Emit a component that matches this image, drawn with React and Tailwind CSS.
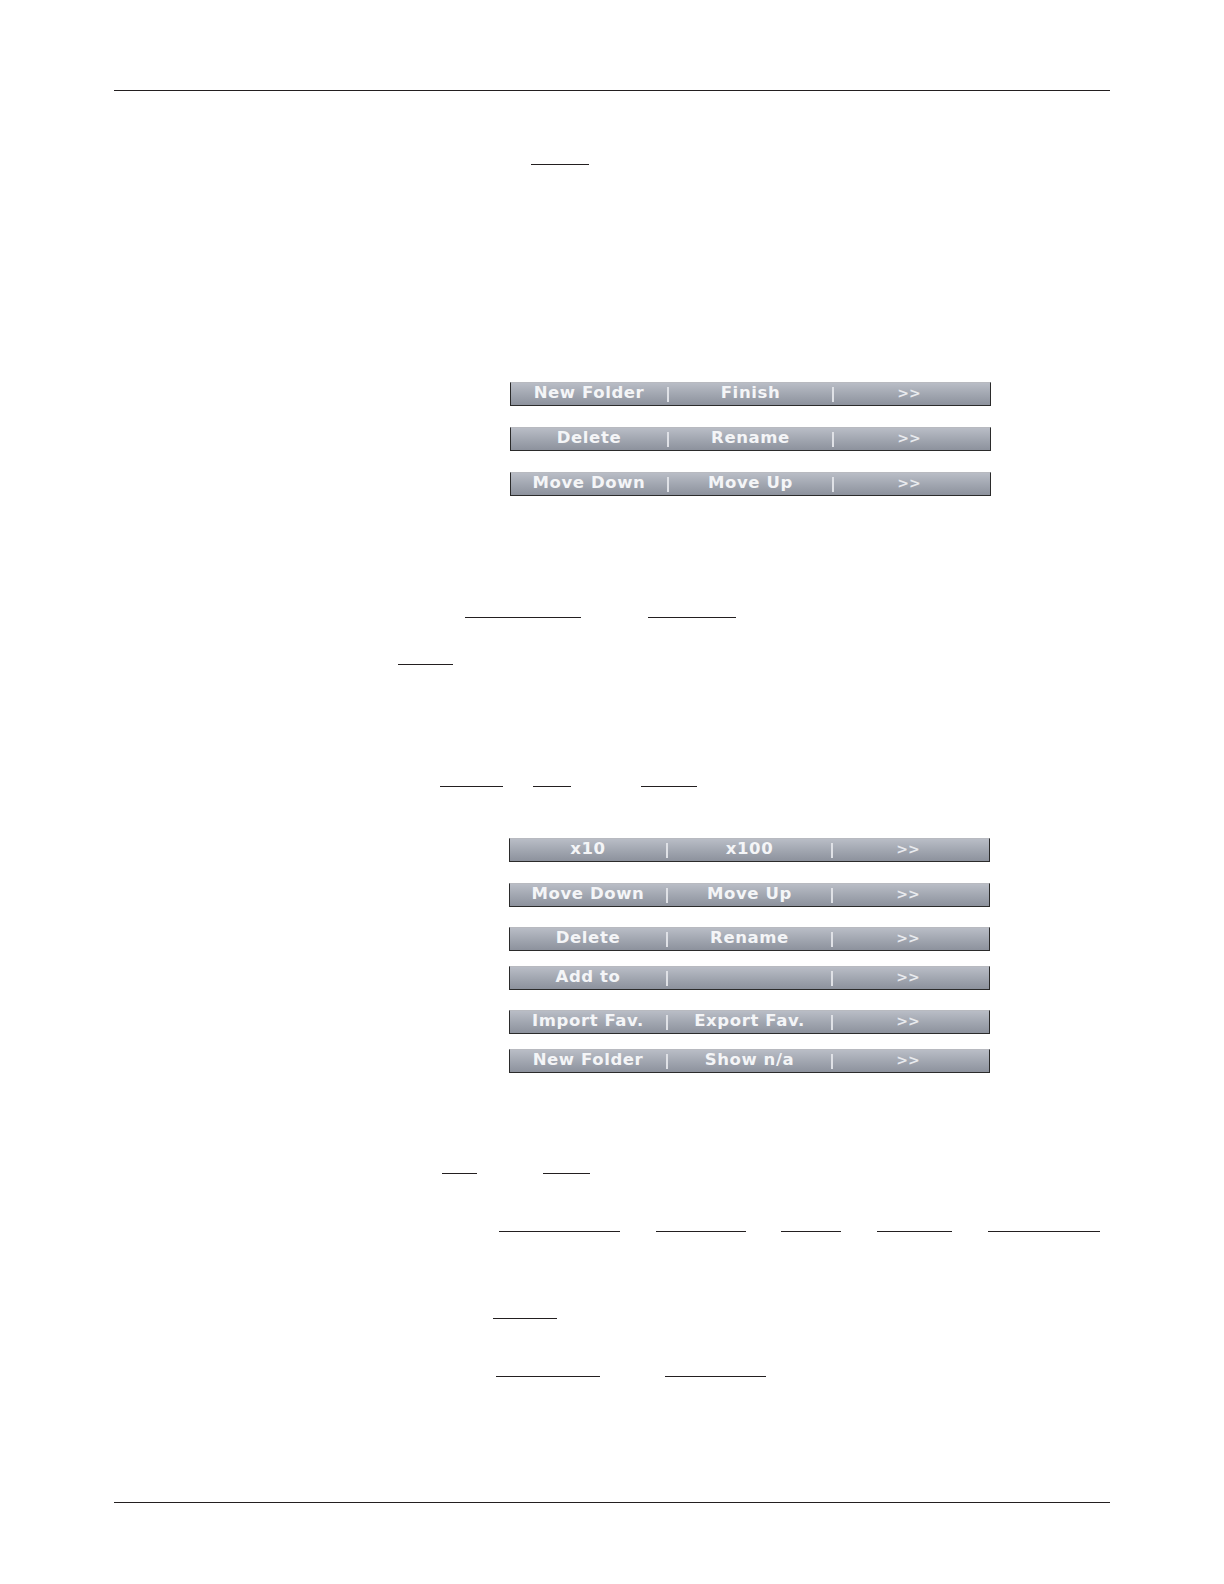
const Bar = ({ a, b, className = "" }) => (
  <div
    className={`flex h-[24px] w-[481px] items-center border border-[#2b2b2b] border-t-[#b8bac0] bg-gradient-to-b from-[#b9bdc6] via-[#a2a7b1] to-[#8d929d] font-['DejaVu_Sans',sans-serif] text-[16.5px] font-bold tracking-[0.6px] text-[#f4f5f7] ${className}`}
  >
    <div className="flex w-[156px] justify-center pb-[2px] leading-none">{a}</div>
    <div className="h-[15px] w-[2px] bg-[#dfe1e6]" />
    <div className="flex w-[163px] justify-center pb-[2px] leading-none">{b}</div>
    <div className="h-[15px] w-[2px] bg-[#dfe1e6]" />
    <div className="flex flex-1 justify-center pb-[2px] pr-[6px] text-[14px] leading-none tracking-[0px] text-[#e8eaee]">&gt;&gt;</div>
  </div>
);

export default function App() {
  return (
    <div className="min-h-[1584px] w-[1224px] bg-white">
      <div className="h-[90px]" />
      <div className="mx-[114px] h-px bg-[#231f20]" />

      <div className="mt-[73px] flex h-px">
        <span className="ml-[531px] w-[58px] bg-[#231f20]" />
      </div>

      <div className="ml-[510px] mt-[217px] flex flex-col gap-[21px]">
        <Bar a="New Folder" b="Finish" />
        <Bar a="Delete" b="Rename" />
        <Bar a="Move Down" b="Move Up" />
      </div>

      <div className="mt-[121px] flex h-px">
        <span className="ml-[465px] w-[116px] bg-[#231f20]" />
        <span className="ml-[67px] w-[88px] bg-[#231f20]" />
      </div>

      <div className="mt-[46px] flex h-px">
        <span className="ml-[398px] w-[55px] bg-[#231f20]" />
      </div>

      <div className="mt-[121px] flex h-px">
        <span className="ml-[440px] w-[63px] bg-[#231f20]" />
        <span className="ml-[30px] w-[38px] bg-[#231f20]" />
        <span className="ml-[70px] w-[56px] bg-[#231f20]" />
      </div>

      <div className="ml-[509px] mt-[51px] flex flex-col">
        <Bar a="x10" b="x100" />
        <Bar a="Move Down" b="Move Up" className="mt-[21px]" />
        <Bar a="Delete" b="Rename" className="mt-[20px]" />
        <Bar a="Add to" b="" className="mt-[15px]" />
        <Bar a="Import Fav." b="Export Fav." className="mt-[20px]" />
        <Bar a="New Folder" b="Show n/a" className="mt-[15px]" />
      </div>

      <div className="mt-[100px] flex h-px">
        <span className="ml-[442px] w-[35px] bg-[#231f20]" />
        <span className="ml-[66px] w-[47px] bg-[#231f20]" />
      </div>

      <div className="mt-[57px] flex h-px">
        <span className="ml-[499px] w-[121px] bg-[#231f20]" />
        <span className="ml-[36px] w-[90px] bg-[#231f20]" />
        <span className="ml-[35px] w-[60px] bg-[#231f20]" />
        <span className="ml-[36px] w-[75px] bg-[#231f20]" />
        <span className="ml-[36px] w-[112px] bg-[#231f20]" />
      </div>

      <div className="mt-[86px] flex h-px">
        <span className="ml-[493px] w-[64px] bg-[#231f20]" />
      </div>

      <div className="mt-[57px] flex h-px">
        <span className="ml-[496px] w-[104px] bg-[#231f20]" />
        <span className="ml-[65px] w-[101px] bg-[#231f20]" />
      </div>

      <div className="mt-[125px] mx-[114px] h-px bg-[#231f20]" />
    </div>
  );
}
